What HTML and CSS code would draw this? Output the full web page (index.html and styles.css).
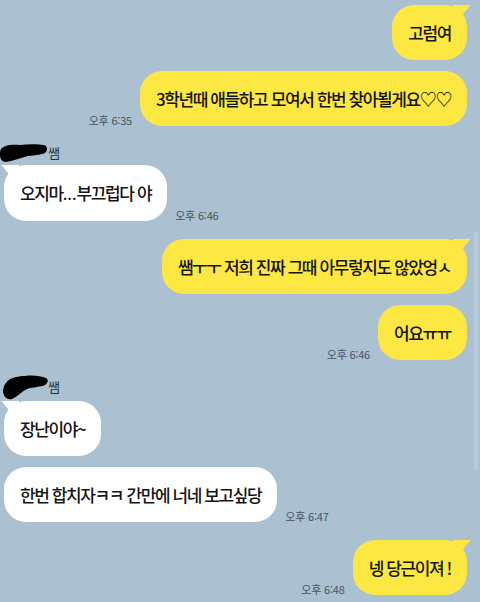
FILE: index.html
```html
<!DOCTYPE html>
<html lang="ko">
<head>
<meta charset="utf-8">
<title>채팅</title>
<link rel="stylesheet" href="styles.css">
</head>
<body>
<div class="chat">
  <div class="row me first-in-group">
    <div class="bubble mine tail">고럼여</div>
  </div>
  <div class="row me">
    <span class="time">오후 6:35</span>
    <div class="bubble mine">3학년때 애들하고 모여서 한번 찾아뵐게요♡♡</div>
  </div>

  <div class="sender">
    <svg class="blot" width="48" height="20" viewBox="0 0 48 20" aria-hidden="true">
      <path d="M1 6 C4 2 12 1 20 2 C28 1 38 1 44 2 C47 3 48 6 46 9 C43 12 36 12 28 13 C20 15 12 18 6 19 C2 19 0 16 0 12 C0 9 0 8 1 6 Z" fill="#000"/>
    </svg>
    <span class="name">쌤</span>
  </div>
  <div class="row you">
    <div class="bubble theirs tail">오지마<span class="dots">...</span>부끄럽다 야</div>
    <span class="time">오후 6:46</span>
  </div>

  <div class="row me group">
    <div class="bubble mine tail">쌤ㅜㅜ 저희 진짜 그때 아무렇지도 않았엉ㅅ</div>
  </div>
  <div class="row me">
    <span class="time">오후 6:46</span>
    <div class="bubble mine">어요ㅠㅠ</div>
  </div>

  <div class="sender second">
    <svg class="blot" width="46" height="25" viewBox="0 0 46 25" aria-hidden="true">
      <path d="M3 8 C6 3 14 1 22 1 C30 0 38 1 43 3 C46 5 45 8 42 10 C38 12 30 12 24 14 C18 17 14 22 9 24 C4 25 1 22 0 17 C0 13 1 10 3 8 Z" fill="#000"/>
    </svg>
    <span class="name">쌤</span>
  </div>
  <div class="row you">
    <div class="bubble theirs tail">장난이야~</div>
  </div>
  <div class="row you">
    <div class="bubble theirs">한번 합치자ㅋㅋ 간만에 너네 보고싶당</div>
    <span class="time">오후 6:47</span>
  </div>

  <div class="row me group">
    <span class="time">오후 6:48</span>
    <div class="bubble mine tail">넹 당근이져 !</div>
  </div>
</div>
<div class="scroll-indicator"></div>
</body>
</html>
```

FILE: styles.css
```css
html, body {
  margin: 0;
  padding: 0;
}

body {
  width: 480px;
  height: 602px;
  overflow: hidden;
  background: #abc1d1;
  font-family: "Noto Sans CJK KR", "Noto Sans", sans-serif;
  color: #141414;
  position: relative;
}

.chat {
  display: flex;
  flex-direction: column;
  padding: 5px 13px 0 4px;
}

.row {
  display: flex;
  align-items: flex-end;
  gap: 8px;
  margin-top: 11px;
}

.row.first-in-group {
  margin-top: 0;
}

.row.group {
  margin-top: 18px;
}

.row.me {
  justify-content: flex-end;
}

.row.you {
  justify-content: flex-start;
}

.bubble {
  position: relative;
  padding: 17px 16px;
  line-height: 21px;
  font-size: 17px;
  font-weight: 500;
  letter-spacing: -1.4px;
  border-radius: 22px;
  white-space: nowrap;
}

.dots {
  letter-spacing: 0;
  font-family: "Noto Sans", sans-serif;
}

.bubble.mine {
  background: #fde843;
}

.bubble.theirs {
  background: #ffffff;
}

.bubble.tail::after {
  content: "";
  position: absolute;
  top: 0;
  width: 18px;
  height: 15px;
}

.bubble.mine.tail::after {
  right: -4px;
  background: #fde843;
  clip-path: polygon(0 0, 100% 0, 88% 14%, 30% 100%, 0 100%);
}

.bubble.theirs.tail::after {
  left: -3px;
  background: #ffffff;
  clip-path: polygon(0 0, 100% 0, 100% 100%, 70% 100%, 12% 14%);
}

.time {
  font-size: 11px;
  line-height: 12px;
  color: #46525f;
  letter-spacing: -0.2px;
  white-space: nowrap;
}

.sender {
  display: flex;
  align-items: center;
  height: 20px;
  margin-top: 17px;
  margin-bottom: -9px;
  margin-left: -4px;
}

.sender.second {
  height: 25px;
  margin-top: 15px;
  margin-bottom: -10px;
  margin-left: -1px;
}

.sender .blot {
  display: block;
  flex: none;
}

.name {
  font-size: 13px;
  line-height: 14px;
  letter-spacing: -0.5px;
  color: #2b2f33;
}

.sender.second .name {
  margin-left: -1px;
  align-self: flex-start;
  margin-top: 5px;
}

.scroll-indicator {
  position: absolute;
  left: 474px;
  top: 231px;
  width: 4px;
  height: 240px;
  background: #b6cad8;
  border-radius: 2px;
}
```
